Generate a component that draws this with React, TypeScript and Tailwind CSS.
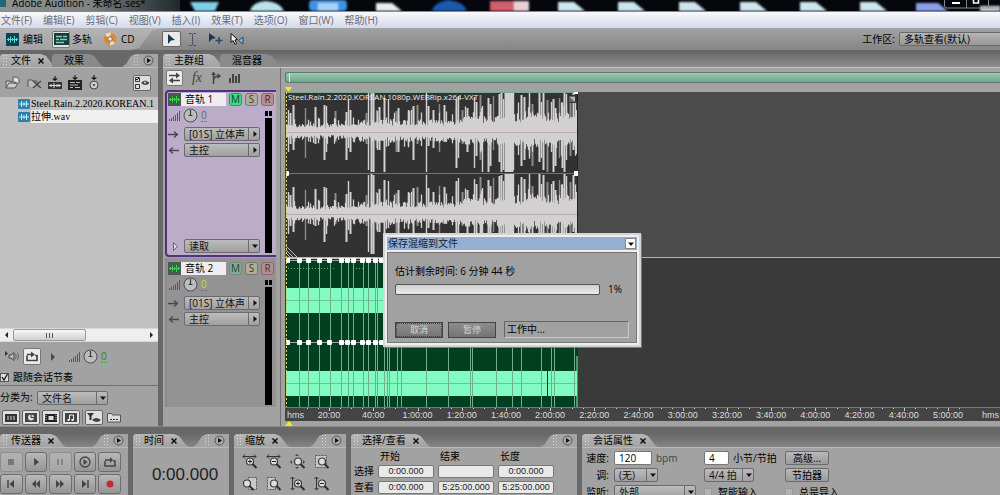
import React from "react";

const UI = "font-['Open_Sans','Noto_Sans_CJK_SC',sans-serif]";

/* ---------- small drawings ---------- */

type SvgProps = { w: number; h: number; children: React.ReactNode; cls?: string };
function Svg({ w, h, children, cls = "" }: SvgProps) {
  return (
    <svg width={w} height={h} viewBox={`0 0 ${w} ${h}`} fill="none" className={`shrink-0 ${cls}`} aria-hidden="true">
      {children}
    </svg>
  );
}

const Grip = () => (
  <Svg w={5} h={11}>
    {[1, 4, 7, 10].map((y) => (
      <g key={y} fill="#dcdcdc">
        <rect x="0" y={y - 1} width="1" height="1" />
        <rect x="3" y={y - 1} width="1" height="1" />
      </g>
    ))}
  </Svg>
);

const WaveIcon = ({ green = false }: { green?: boolean }) => (
  <Svg w={13} h={13}>
    <rect width="13" height="13" fill={green ? "#4a5a4d" : "#12405a"} />
    <path
      d="M1 6.5h11M2.5 5v3M4.5 3.5v6M6.5 5v3M8.5 3v7M10.5 5v3"
      stroke={green ? "#35d552" : "#5fd7c4"}
    />
  </Svg>
);

const FileWave = () => (
  <Svg w={12} h={10}>
    <rect width="12" height="10" rx="1" fill="#2e7fae" />
    <path d="M1 5h10M3.5 2v6M6 3v4M8.500 2v6" stroke="#c5f1f2" />
  </Svg>
);

const MultitrackIcon = () => (
  <Svg w={15} h={12}>
    <rect width="15" height="12" fill="#173a3d" />
    <path d="M2 3.500h6M9 3.500h4M2 6.500h3M6 6.500h7M2 9.500h8" stroke="#7fd0b4" strokeWidth="1.500" />
  </Svg>
);

const Disc = () => (
  <Svg w={14} h={14}>
    <circle cx="7" cy="7" r="6.500" fill="#d98b3e" />
    <path d="M7 7L2 3a6.500 6.500 0 0 1 6-2.400zM7 7l5 4a6.500 6.500 0 0 1-5 2.400z" fill="#f6d9b0" />
    <circle cx="7" cy="7" r="2.300" fill="#e9e9e9" stroke="#8b6239" />
  </Svg>
);

const Bars = () => (
  <Svg w={12} h={10}>
    <path d="M1.500 8v2M3.500 7v3M5.500 5.500V10M7.500 4v6M9.500 2v8M11.500 0v10" stroke="#5b5560" />
  </Svg>
);

const Knob = () => (
  <Svg w={15} h={15}>
    <circle cx="7.500" cy="7.500" r="6.500" fill="#bdbdbd" stroke="#4e4a52" />
    <path d="M7.500 2v6M5.500 7.500h4" stroke="#3a3a3a" strokeWidth="1.200" />
  </Svg>
);

const Arrow = ({ left = false }: { left?: boolean }) => (
  <Svg w={11} h={7}>
    <path
      d={left ? "M11 3.500H2M5 .5L1.500 3.500 5 6.500" : "M0 3.500h9M6 .5l3.500 3L6 6.500"}
      stroke="#4b4650"
      strokeWidth="1.300"
    />
  </Svg>
);

const LoopIcon = () => (
  <Svg w={14} h={12}>
    <path d="M2 4.500V9.500h10V4.500H10M2 3.500h5" stroke="#444" strokeWidth="1.700" />
    <path d="M6 .5L10 3.500 6 6.500z" fill="#444" />
  </Svg>
);

const Magnifier = ({ kind }: { kind: string }) => (
  <Svg w={16} h={16}>
    {(kind === "h+" || kind === "h-") && (
      <path d="M1 2.500h13M3 .5L1 2.500l2 2M12 .5l2 2-2 2" stroke="#333" />
    )}
    {(kind === "v+" || kind === "v-") && <path d="M2.500 1v13M.5 3l2-2 2 2M.5 12l2 2 2-2" stroke="#333" />}
    {kind === "all" && (
      <path d="M7 0l2 2H5zM0 8l2-2v4zM15 8l-2-2v4zM7 15l2-2H5z" fill="#444" />
    )}
    {["sel", "left", "right"].includes(kind) && (
      <rect
        x={kind === "left" ? 6.5 : 1.5}
        y="1.500"
        width={kind === "sel" ? 11 : 8}
        height="12"
        fill="#c8c8c8"
        stroke="#555"
        strokeDasharray="2 1"
      />
    )}
    <circle cx={kind === "left" ? 5 : 8} cy="7.500" r="3.500" fill="#dedede" stroke="#3b3b3b" strokeWidth="1.200" />
    <path d={kind === "left" ? "M7.500 10l4 4" : "M10.500 10l4 4"} stroke="#2d2d2d" strokeWidth="2" />
    {kind.endsWith("+") && <path d="M6 7.500h4M8 5.500v4" stroke="#222" />}
    {kind.endsWith("-") && <path d="M6 7.500h4" stroke="#222" />}
  </Svg>
);

const Tri = ({ down = false }: { down?: boolean }) => (
  <Svg w={6} h={6}>
    <path d={down ? "M0 1.500h6L3 5z" : "M1.500 0v6L5 3z"} fill="#111" />
  </Svg>
);

/* ---------- controls ---------- */

type DropProps = { label: string; value: string; down?: boolean; cls?: string };
function Drop({ label, value, down = false, cls = "" }: DropProps) {
  return (
    <span className={`grid h-[14px] shrink-0 items-center ${cls}`}>
      <select
        aria-label={label}
        className="col-start-1 row-start-1 h-full w-full appearance-none rounded-[2px] border border-[#6c6a6e] bg-linear-to-b from-[#bcbcbc] to-[#a0a0a0] pl-1 text-[10px] leading-[12px] text-[#111]"
      >
        <option>{value}</option>
      </select>
      <span className="pointer-events-none col-start-1 row-start-1 flex h-full w-3 items-center justify-center justify-self-end border-l border-[#6c6a6e]">
        <Tri down={down} />
      </span>
    </span>
  );
}

function Tab({ title, active = false, close = false }: { title: string; active?: boolean; close?: boolean }) {
  return (
    <button
      className={`flex h-[13px] items-center gap-[3px] whitespace-nowrap text-[10px] leading-[13px] text-black [clip-path:polygon(0_100%,0_2px,2px_0,calc(100%-15px)_0,calc(100%-10px)_2px,calc(100%-3px)_11px,100%_100%)] ${
        active ? "bg-linear-to-b from-[#b6b6b6] to-[#a2a2a2] pl-[3px]" : "-ml-1 bg-[#8a8a8a] pl-3"
      } ${close ? "pr-3" : "pr-5"}`}
    >
      {active && <Grip />}
      <span>{title}</span>
      {close && (
        <Svg w={6} h={6} cls="ml-1">
          <path d="M.5.5l5 5M5.500.5l-5 5" stroke="#111" strokeWidth="1.500" />
        </Svg>
      )}
    </button>
  );
}

const TabMenu = () => (
  <button
    aria-label="面板菜单"
    className="ml-auto flex h-[13px] items-center gap-1 bg-[#a4a4a4] pl-3 pr-1 [clip-path:polygon(0_100%,4px_10px,9px_2px,14px_0,100%_0,100%_100%)]"
  >
    <Grip />
    <Svg w={11} h={11}>
      <circle cx="5.500" cy="5.500" r="4.500" fill="#a9a9a9" stroke="#555" />
      <path d="M4 3v5l4-2.500z" fill="#111" />
    </Svg>
  </button>
);

function Panel({ title, cls, menu = true, children }: { title: string; cls: string; menu?: boolean; children: React.ReactNode }) {
  return (
    <section className={`flex min-w-0 flex-col ${cls}`}>
      <div className="flex bg-linear-to-b from-[#686868] to-[#858585]">
        <Tab title={title} active close />
        {menu && <TabMenu />}
      </div>
      <div className="flex-1 overflow-hidden border-t border-[#b8b8b8] bg-[#a2a2a2]">{children}</div>
    </section>
  );
}

/* ---------- track header ---------- */

type TrackProps = { name: string; selected?: boolean; cls: string };
function TrackHeader({ name, selected = false, cls }: TrackProps) {
  const chip = "h-[13px] w-[13px] rounded-[3px] border text-center text-[10px] leading-[11px]";
  return (
    <div className={`mr-1 flex flex-col pl-px pr-px ${cls}`}>
      <div className="flex items-center gap-[3px]">
        <div className="flex w-[58px]">
          <WaveIcon green />
          <input
            aria-label="音轨名称"
            defaultValue={name}
            className="h-[13px] min-w-0 flex-1 bg-[#efedf0] px-1 text-[10px] leading-[13px] text-black"
          />
        </div>
        <button className={`${chip} ${selected ? "border-[#2a9a58] bg-[#3edb81] text-[#0c4a26]" : "border-[#6d8c7b] bg-[#86ab96] text-[#1f4531]"}`}>M</button>
        <button className={`${chip} border-[#7a7768] bg-[#b1ad98] text-[#3e3b28]`}>S</button>
        <button className={`${chip} border-[#8a686b] bg-[#b48e93] text-[#532a2f]`}>R</button>
      </div>
      <div className="flex flex-1">
        <div className="flex flex-1 flex-col">
          <div className="mt-[2px] flex items-center gap-[3px]">
            <Bars />
            <Knob />
            <span className={`border-b border-dotted border-[#667] text-[10px] leading-[11px] ${selected ? "text-[#4a7058]" : "text-[#b8e61e]"}`}>0</span>
          </div>
          <div className="mt-1 flex items-center gap-[5px]">
            <Arrow />
            <Drop label="输入" value="[01S] 立体声" cls="w-[76px]" />
          </div>
          <div className="mt-[2px] flex items-center gap-[5px]">
            <Arrow left />
            <Drop label="输出" value="主控" cls="w-[76px]" />
          </div>
          {selected && (
            <div className="mb-[2px] mt-auto flex items-center gap-[5px]">
              <Svg w={11} h={9}>
                <path d="M5.500.5v8l4-4z" fill="#d9d3df" stroke="#6b6470" />
              </Svg>
              <Drop label="自动化" value="读取" down cls="w-[76px]" />
            </div>
          )}
        </div>
        <div className="mr-[3px] mt-[5px] flex w-[7px] flex-col gap-[2px]">
          <div className="flex justify-between">
            <span className="h-[5px] w-[3px] bg-black" />
            <span className="h-[5px] w-[3px] bg-black" />
          </div>
          <span className="mb-[2px] flex-1 bg-black" />
        </div>
      </div>
    </div>
  );
}

/* ---------- clips ---------- */

// [x, height above the axis, depth below it]
const PEAKS: number[][] = [
  [2, 22, 20], [4, 19, 12], [7, 27, 18], [19, 24, 26], [29, 25, 12], [38, 27, 28], [40, 26, 20], [49, 21, 10],
  [60, 20, 28], [62, 33, 16], [64, 22, 20], [80, 19, 12], [82, 39, 38], [85, 40, 40], [87, 39, 40], [90, 22, 16],
  [93, 25, 18], [98, 34, 40], [102, 33, 14], [110, 21, 20], [112, 24, 20], [122, 22, 14], [127, 26, 28],
  [131, 27, 12], [140, 39, 40], [142, 26, 14], [147, 22, 16], [153, 28, 20], [158, 27, 10], [170, 33, 36],
  [172, 36, 26], [176, 22, 12], [181, 24, 20], [188, 35, 36], [190, 30, 24], [194, 37, 28], [196, 26, 40],
  [202, 34, 40], [204, 28, 34], [207, 36, 18], [213, 38, 30], [215, 39, 40], [217, 33, 38], [219, 40, 40], [220, 40, 40],
  [221, 40, 40], [222, 40, 40], [223, 40, 40], [224, 40, 40], [225, 40, 40], [226, 40, 40], [227, 40, 38],
  [235, 37, 34], [238, 35, 28], [243, 40, 24], [246, 28, 34], [253, 40, 30], [255, 30, 26], [257, 39, 38],
  [261, 32, 40], [265, 30, 20], [267, 33, 40], [269, 24, 34], [273, 34, 26], [276, 26, 36], [278, 40, 40],
  [280, 38, 28], [284, 32, 24], [287, 39, 18], [290, 22, 22],
];

function laneHeights() {
  const out: { x: number; up: number; dn: number }[] = [];
  let s = 7;
  const rnd = () => {
    s = (s * 16807) % 2147483647;
    return s / 2147483647;
  };
  for (let x = 0; x < 291; x++) {
    const level = x < 70 ? 6 : x < 170 ? 9 : x < 228 ? 12 : 14;
    const spike = rnd() > 0.85 ? 1.8 : 1;
    out.push({ x, up: level * (0.7 + rnd() * 0.7) * spike, dn: level * (0.5 + rnd() * 0.6) * spike });
  }
  return out;
}
const LANE = laneHeights();

function Lane({ cy }: { cy: number }) {
  return (
    <g>
      {PEAKS.map(([x, up, dn], i) => (
        <path
          key={i}
          d={`M${x + 0.5} ${cy - up}V${cy + dn}`}
          stroke={i % 4 === 3 && (x < 219 || x > 227) ? "#8d8b8c" : "#d3d0d1"}
          strokeWidth={i % 3 ? 2 : 1.4}
        />
      ))}
      <path
        d={LANE.map(({ x, up, dn }) => `M${x + 0.5} ${cy - up}V${cy + dn}`).join("")}
        stroke="#d3d0d1"
        strokeWidth="1.300"
      />
      <path d={`M0 ${cy}.5H291`} stroke="#b9abac" />
    </g>
  );
}

function WaveClip() {
  return (
    <svg viewBox="0 0 292 165" width="292" height="165" fill="none" className="shrink-0" role="img" aria-label="音轨 1 波形">
      <rect width="292" height="165" fill="#333233" />
      <Lane cy={40} />
      <Lane cy={122} />
      <path d="M0 .5H292" stroke="#79a890" />
      <path d="M0 81.500H292" stroke="#62778a" strokeWidth="1.200" />
      <path d="M291.500 0V165" stroke="#222" />
      <g fill="#fff">
        <rect x="0" y="79" width="3" height="5" rx="1" />
        <rect x="288" y="79" width="5" height="5" />
        <rect x="288" y="0" width="4" height="2" />
      </g>
      <rect x="282.500" y="3.500" width="7" height="7" fill="#666" stroke="#333" />
      <path d="M284 5h5v5z" fill="#bbb" />
      <path d="M0 154l11 11M0 158l7 7M0 161l4 4" stroke="#bbb" />
      <path d="M.5 0V165" stroke="#d9d34a" strokeDasharray="2 2" />
    </svg>
  );
}

const CUTS = [13, 22, 33, 44, 55, 62, 67, 77, 82, 89, 91, 98, 101, 103, 111, 115, 140, 162, 184, 186, 210, 226, 235, 255, 265, 268, 288];
const HANDLES = [1, 13, 22, 33, 43, 55, 61, 67, 76, 82, 89, 95];

function GreenClip() {
  return (
    <svg viewBox="0 0 292 149" width="292" height="149" fill="none" className="shrink-0" role="img" aria-label="音轨 2 波形">
      <rect width="292" height="149" fill="#003f20" />
      <rect width="292" height="1" fill="#c9c9c9" />
      <path d="M0 30H291V55H0zM0 113H291V138H0z" fill="#82fbc0" />
      <path d="M0 42.500H291M0 125.500H291" stroke="#62c896" />
      <path d="M2 10.500h48M70 10.500h8" stroke="#6aa487" strokeDasharray="1 2" />
      {CUTS.map((x) => (
        <path key={x} d={`M${x}.5 1V149`} stroke="#6fae8e" />
      ))}
      <path d="M261.500 85V146" stroke="#063d22" />
      <path d="M291 98V149" stroke="#82fbc0" />
      <path d="M0 2.500H97M0 84.500H97" stroke="#9aa79f" />
      {HANDLES.map((x) => (
        <g key={x} fill="#fff">
          <rect x={x - 2} y="0" width="5" height="5" rx="1" />
          <rect x={x - 2} y="82" width="5" height="5" rx="1" />
        </g>
      ))}
      <path d="M.5 0V149" stroke="#d9d34a" strokeDasharray="2 2" />
    </svg>
  );
}

const TIMES = ["20:00", "40:00", "1:00:00", "1:20:00", "1:40:00", "2:00:00", "2:20:00", "2:40:00", "3:00:00", "3:20:00", "3:40:00", "4:00:00", "4:20:00", "4:40:00", "5:00:00"];

function Ruler() {
  return (
    <div className="flex h-[14px] border-t border-[#777] bg-[#444] text-[9px] leading-[10px] text-[#dedede] font-['Liberation_Sans',sans-serif]">
      <span className="w-[22px] pl-[2px] pt-[2px]">hms</span>
      {TIMES.map((t) => (
        <div key={t} className="flex min-w-0 flex-1 flex-col items-center">
          <div className="flex h-[2px] w-full">
            <span className="h-px w-1/4 border-l border-[#ccc]" />
            <span className="h-px w-1/4 border-l border-[#ccc]" />
            <span className="h-[3px] w-1/4 border-l border-[#ccc]" />
            <span className="h-px w-1/4 border-l border-[#ccc]" />
          </div>
          <span>{t}</span>
        </div>
      ))}
      <span className="w-[30px] whitespace-nowrap pr-px pt-[2px] text-right">hms</span>
    </div>
  );
}

/* ---------- page sections ---------- */

function TitleBar() {
  return (
    <header className="flex h-[11px] items-end overflow-hidden bg-[#05070c]">
      <div className="flex h-full w-[180px] items-start bg-linear-to-r from-[#8e9494] via-[#7d8384] to-[#20282c]">
        <Svg w={7} h={8}>
          <rect width="6" height="7" fill="#1f6a78" />
        </Svg>
        <h1 className="-mt-1 ml-[5px] whitespace-nowrap text-[10px] leading-[14px] text-black">
          Adobe Audition - 未命名.ses*
        </h1>
      </div>
      <svg viewBox="180 0 820 11" preserveAspectRatio="none" className="h-full min-w-0 flex-1" aria-hidden="true">
        <defs>
          <filter id="soft" x="-20%" y="-20%" width="140%" height="140%">
            <feGaussianBlur stdDeviation="1.200" />
          </filter>
        </defs>
        <g filter="url(#soft)">
          <path d="M190 2h29l-4 9h-20z" fill="#7fd0e6" />
          <path d="M250 11q2-9 16-10 14 1 18 10z" fill="#b9e2ec" />
          <rect x="309" y="0" width="38" height="11" rx="4" fill="#3f93e4" />
          <path d="M318 3h20v8h-20z" fill="#a4d3f7" />
          <path d="M376 3h16l10 8h-26z" fill="#e8eef0" />
          <path d="M432 11q2-9 17-11 15 2 18 11z" fill="#1c58b0" />
          <rect x="490" y="1" width="24" height="10" fill="#cf5f6e" />
          <rect x="514" y="1" width="15" height="10" fill="#ead0d6" />
          {[558, 618, 679, 740, 800, 860].map((x) => (
            <path key={x} d={`M${x} 2h16l11 9H${x}z`} fill="#cde6ee" />
          ))}
          <path d="M916 3h22l10 8h-32z" fill="#8ba0ea" />
          <path d="M980 6h20v5h-20z" fill="#cfd8e0" />
        </g>
        <path d="M944.500 0v6q0 2 3 2H1000M966.500 0v8M988.500 0v8" stroke="#888" fill="none" />
        <rect x="952" y="2" width="8" height="2" fill="#fff" />
        <path d="M973.500-2v5h5v-5" stroke="#fff" strokeWidth="1.500" fill="none" />
      </svg>
    </header>
  );
}

const MENUS = ["文件(F)", "编辑(E)", "剪辑(C)", "视图(V)", "插入(I)", "效果(T)", "选项(O)", "窗口(W)", "帮助(H)"];

function ToolBar() {
  return (
    <div className="flex h-[22px] items-stretch bg-linear-to-b from-[#a3a3a3] to-[#858585] text-[10px] text-black">
      <div className="flex w-[162px] items-center bg-linear-to-b from-[#b4b4b4] to-[#a2a2a2] pl-[6px] [clip-path:polygon(0_0,100%_0,94%_10%,86%_90%,80%_100%,0_100%)]">
        <button className="flex items-center gap-1"><WaveIcon />编辑</button>
        <button className="ml-[9px] flex items-center gap-[2px]">
          <span className="flex h-[17px] w-[18px] items-center justify-center rounded-[2px] border border-[#777] bg-[#e2e2e2]"><MultitrackIcon /></span>
          多轨
        </button>
        <button className="ml-[11px] flex items-center gap-1"><Disc />CD</button>
      </div>
      <div className="flex items-center gap-[7px]">
        <button aria-label="混合工具" className="flex h-4 w-[19px] items-center justify-center rounded-[2px] border border-[#666] bg-[#e9e9e9]">
          <Svg w={9} h={11}><path d="M1 0v10l3-3.500L8 6z" fill="#17384f" /></Svg>
        </button>
        <button aria-label="时间选择">
          <Svg w={9} h={13}><path d="M1 .5h2.500l1 1 1-1H8M1 12.500h2.500l1-1 1 1H8M4.500 1v11" stroke="#4c5063" /></Svg>
        </button>
        <button aria-label="移动复制" className="ml-1">
          <Svg w={15} h={12}><path d="M1 0v9l3-3 4-1z" fill="#17384f" /><path d="M11 4v7M7.500 7.500h7" stroke="#27496a" strokeWidth="1.500" /></Svg>
        </button>
        <button aria-label="擦洗">
          <Svg w={15} h={13}><path d="M1 .5v9l2-2 2 4 1.500-1L5 7l2.500-.5z" fill="#eee" stroke="#111" /><path d="M13 4v7L8.500 7.500z" fill="#8fb6ce" stroke="#27496a" /></Svg>
        </button>
      </div>
      <label className="ml-auto flex items-center gap-1 overflow-hidden">
        工作区:
        <span className="w-[101px]">
          <select className="h-[14px] w-[130px] appearance-none rounded-[2px] border border-[#6a6a6a] bg-linear-to-b from-[#b5b5b5] to-[#989898] pl-1 text-[10px] leading-[12px]">
            <option>多轨查看(默认)</option>
          </select>
        </span>
      </label>
    </div>
  );
}

function FilesPanel() {
  const small = "flex h-[15px] w-[18px] items-center justify-center rounded-[2px] border border-[#666] bg-[#e0e0e0]";
  return (
    <section className="flex w-[158px] shrink-0 flex-col">
      <div className="flex items-end pt-1">
        <Tab title="文件" active close />
        <Tab title="效果" />
        <TabMenu />
      </div>
      <div className="flex flex-1 flex-col border-t border-[#bbb] bg-[#a2a2a2]">
        <div className="flex h-[29px] shrink-0 items-center gap-[6px] pl-[5px] pr-[7px]">
          <button aria-label="打开文件">
            <Svg w={16} h={14}><path d="M1 12V5h4l1 1h4v2M1 12l3-5h9l-3 5z" fill="#ccc" stroke="#555" /><path d="M8 5V1h4l2 2v4" fill="#ddd" stroke="#555" /></Svg>
          </button>
          <button aria-label="关闭文件">
            <Svg w={15} h={12}><path d="M1 10V3h4l1 1h4v5" stroke="#555" fill="#bbb" /><path d="M6 4l8 7M14 4l-8 7" stroke="#444" strokeWidth="1.300" /></Svg>
          </button>
          <button aria-label="插入到多轨">
            <Svg w={14} h={14}><path d="M4 2.500h6L7 5zM6.500 0h1v3h-1z" fill="#111" /><rect y="6" width="14" height="7" fill="#333" /><path d="M1 9.500h12M3 8v3M6 7v5M9 8v3M11 8v3" stroke="#ddd" /></Svg>
          </button>
          <button aria-label="插入到会话">
            <Svg w={14} h={15}><path d="M4 2.500h6L7 5zM6.500 0h1v3h-1z" fill="#111" /><rect y="5" width="14" height="10" fill="#222" /><path d="M2 7.500h5M8 7.500h4M2 10h8M2 12.500h3M7 12.500h5" stroke="#bbb" /></Svg>
          </button>
          <button aria-label="插入到 CD">
            <Svg w={13} h={15}><path d="M3 2.500h6L6 5zM5.500 0h1v3h-1z" fill="#111" /><circle cx="6" cy="10" r="4" fill="#ccc" stroke="#444" /><circle cx="6" cy="10" r="1" fill="#333" /></Svg>
          </button>
          <button aria-label="显示选项" className="ml-auto flex h-4 w-[18px] items-center justify-center rounded-[2px] border border-[#666] bg-[#dedede]">
            <Svg w={15} h={12}><path d="M.5.5h4v4h-4zM.5 7.500h4v4h-4z" stroke="#333" /><path d="M1 2l1 1 2-2" stroke="#111" /><path d="M6 6q4-5 8.500 0-4 4-8.500 0z" fill="#444" /><circle cx="10" cy="5.500" r="1" fill="#ddd" /></Svg>
          </button>
        </div>
        <ul className="min-h-0 flex-1 bg-[#c1c1c1] text-[10px] leading-[13px] text-black font-['Liberation_Serif','Noto_Sans_CJK_SC',serif]">
          <li className="flex items-center gap-[1px] overflow-hidden whitespace-nowrap pl-[18px]"><FileWave />Steel.Rain.2.2020.KOREAN.1</li>
          <li className="flex items-center gap-[1px] pl-[18px]"><FileWave /><span className="flex-1 bg-[#f0f0f0]">拉伸.wav</span></li>
        </ul>
        <div className="flex h-[14px] shrink-0 items-center border-y border-[#d8d8d8] bg-[#eee] pl-1 pr-1">
          <Svg w={5} h={6}><path d="M4 0v6L1 3z" fill="#222" /></Svg>
          <span className="ml-1 flex h-[12px] w-[73px] items-center justify-center rounded-[2px] border border-[#999] bg-linear-to-b from-[#f8f8f8] to-[#cfcfd2]">
            <Svg w={7} h={5}><path d="M.5 0v5M3.500 0v5M6.500 0v5" stroke="#555" /></Svg>
          </span>
          <Svg w={5} h={6} cls="ml-auto"><path d="M1 0v6l3-3z" fill="#222" /></Svg>
        </div>
        <div className="flex h-[27px] shrink-0 items-center pl-1 pt-[2px]">
          <button aria-label="播放"><Svg w={15} h={11}><path d="M1 0v5l3-2.500z" fill="#333" /><path d="M5 4h2l3-2.500v8L7 7H5z" stroke="#444" fill="#bbb" /><path d="M11.500 3q1.500 2.500 0 5M13.500 2q2 3.500 0 7" stroke="#666" /></Svg></button>
          <button aria-label="循环播放" className="ml-1 flex h-[17px] w-[18px] items-center justify-center rounded-[2px] border border-[#777] bg-[#ececec]"><LoopIcon /></button>
          <Svg w={6} h={8} cls="ml-[9px]"><path d="M1 0v8l4-4z" fill="#4a4a4a" /></Svg>
          <span className="ml-[12px] flex items-center gap-[3px]"><Bars /><Knob /><span className="border-b border-dotted border-[#3a3] text-[10px] leading-[11px] text-[#238a23]">0</span></span>
        </div>
        <label className="flex h-[16px] shrink-0 items-center gap-1 text-[10px] leading-[14px]">
          <input type="checkbox" defaultChecked className="peer sr-only" />
          <Svg w={9} h={9}><rect x=".5" y=".5" width="8" height="8" fill="#dedede" stroke="#555" /><path d="M2 4l2 3 3.500-6" stroke="#111" strokeWidth="1.300" /></Svg>
          跟随会话节奏
        </label>
        <div className="flex h-[22px] shrink-0 items-center gap-1 border-t border-[#6f6f6f] pt-[2px] text-[10px]">
          <span className="w-[33px] whitespace-nowrap">分类为:</span>
          <Drop label="分类为" value="文件名" down cls="w-[71px]" />
        </div>
        <div className="flex h-[19px] shrink-0 items-center gap-[2px] pl-[2px] pt-[2px]">
          <button aria-label="音频文件" className={small}><Svg w={12} h={8}><rect width="12" height="8" fill="#333" /><path d="M3 2v4M6 2v4M9 2v4" stroke="#ddd" /></Svg></button>
          <button aria-label="循环文件" className={small}><Svg w={12} h={9}><rect width="12" height="9" fill="#444" /><circle cx="6" cy="4.500" r="3" fill="#ddd" /><path d="M6 1v3.500h3" stroke="#333" /></Svg></button>
          <button aria-label="视频文件" className={small}><Svg w={12} h={8}><rect width="12" height="8" fill="#222" /><rect x="3.500" y="2" width="5" height="4" fill="#ddd" /><path d="M1 1v6M11 1v6" stroke="#ccc" strokeDasharray="1 1" /></Svg></button>
          <button aria-label="MIDI 文件" className={small}><Svg w={12} h={9}><rect width="12" height="9" fill="#444" /><path d="M4.500 7V2h4v5" stroke="#eee" /><path d="M2.500 6h2v2h-2zM6.500 6h2v2h-2z" fill="#eee" /></Svg></button>
          <span className="h-[15px] w-px bg-[#777]" />
          <button aria-label="筛选" className={small}><Svg w={14} h={10}><path d="M0 0h7L4.500 3v4h-2V3z" fill="#333" /><path d="M5 7q4-4 9 0-4 4-9 0z" fill="#444" /></Svg></button>
          <button aria-label="完整路径" className="ml-[2px]"><Svg w={14} h={11}><path d="M.5 10V1.500h4l1 1.500h8V10z" fill="#ddd" stroke="#555" /><path d="M3 7.500h2M6 7.500h2M9 7.500h2" stroke="#333" /></Svg></button>
        </div>
      </div>
    </section>
  );
}

function MainGroup() {
  return (
    <section className="flex min-w-0 flex-1 flex-col">
      <div className="flex items-end bg-linear-to-b from-[#636363] to-[#8e8e8e] pt-1">
        <Tab title="主群组" active />
        <Tab title="混音器" />
      </div>
      <div className="flex min-h-0 flex-1 border-t border-[#c6c6c6] bg-[#a2a2a2]">
        <div className="flex w-[118px] shrink-0 flex-col border-r border-[#707070] pl-[2px]">
          <div className="mb-[2px] flex h-5 shrink-0 items-center gap-[8px] pl-px">
            <button aria-label="输入输出" className="flex h-4 w-[17px] items-center justify-center rounded-[2px] border border-[#777] bg-[#ececec]">
              <Svg w={13} h={12}><path d="M1 3.500h8M12 8.500H4" stroke="#444" strokeWidth="1.700" /><path d="M8 .5l4 3-4 3zM5 5.500l-4 3 4 3z" fill="#444" /></Svg>
            </button>
            <button className="w-3 text-[14px] italic leading-[14px] text-[#444] font-['Liberation_Serif',serif]">fx</button>
            <button aria-label="发送"><Svg w={10} h={12}><path d="M2.500 12V0M2.500 8.500Q3 4 8 4" stroke="#444" strokeWidth="1.500" /><path d="M6.500 1l3.500 3-3.500 3zM0 3l2.500-3L5 3z" fill="#444" /></Svg></button>
            <button aria-label="均衡"><Svg w={11} h={10}><path d="M1 5v5M4 1v9M7 3v7M10 1v9" stroke="#444" strokeWidth="2" /></Svg></button>
          </div>
          <TrackHeader name="音轨 1" selected cls="h-[167px] shrink-0 rounded-l-[4px] border-2 border-r-0 border-[#54307e] bg-[#bbadca] pt-px" />
          <TrackHeader name="音轨 2" cls="mt-px h-[149px] shrink-0 border-l-2 border-[#8a8a8a] bg-[#939393] pt-1" />
        </div>
        <div className="flex min-w-0 flex-1 flex-col pl-1">
          <div className="mt-1 h-[11px] shrink-0 rounded-l-[3px] border border-r-0 border-[#5d7a6c] bg-linear-to-b from-[#9cc9b5] to-[#6fa68c] pl-[3px]">
            <span className="block h-full w-px bg-[#d9efe4]" />
          </div>
          <div className="flex h-[9px] shrink-0 items-end">
            <Svg w={7} h={5}><path d="M0 0h7L3.500 5z" fill="#f4ec1a" /></Svg>
          </div>
          <div className="grid shrink-0 bg-[#4b4b4b] pl-px">
            <div className="col-start-1 row-start-1"><WaveClip /></div>
            <span className="col-start-1 row-start-1 self-start pl-[2px] text-[8px] leading-[10px] text-[#eee]">
              Steel.Rain.2.2020.KOREAN.1080p.WEBRip.x264-VXT
            </span>
          </div>
          <div className="shrink-0 border-t border-[#b5b5b5] bg-[#3a3a3a] pl-px"><GreenClip /></div>
          <Ruler />
          <div className="flex shrink-0 items-start">
            <Svg w={8} h={5}><path d="M0 5h8L4 0z" fill="#f4ec1a" /></Svg>
          </div>
        </div>
      </div>
    </section>
  );
}

const TRANSPORT: { name: string; art: React.ReactNode; dim?: boolean }[] = [
  { name: "停止", dim: true, art: <rect x="4" y="3" width="6" height="6" fill="#777" /> },
  { name: "播放", art: <path d="M5 2v8l5-4z" fill="#444" /> },
  { name: "暂停", dim: true, art: <path d="M5 3v6M9 3v6" stroke="#777" strokeWidth="1.500" /> },
  { name: "播放到结尾", art: <><circle cx="7" cy="6" r="5" stroke="#444" strokeWidth="1.300" /><path d="M5.500 3v6L9.500 6z" fill="#444" /></> },
  { name: "循环", art: <><path d="M2 5v5h10V5h-2M2 4h5" stroke="#444" strokeWidth="1.500" /><path d="M7 1l3 3-3 3z" fill="#444" /></> },
  { name: "到开头", art: <><path d="M4 2v8" stroke="#444" strokeWidth="1.500" /><path d="M10 2v8L5.500 6z" fill="#444" /></> },
  { name: "倒放", art: <path d="M7 2v8L3 6zM11 2v8L7 6z" fill="#444" /> },
  { name: "快进", art: <path d="M3 2v8l4-4zM7 2v8l4-4z" fill="#444" /> },
  { name: "到结尾", art: <><path d="M10 2v8" stroke="#444" strokeWidth="1.500" /><path d="M4 2v8l4.500-4z" fill="#444" /></> },
  { name: "录音", art: <circle cx="7" cy="6" r="3.500" fill="#c62a31" /> },
];

function BottomRow() {
  const cell = "h-[13px] w-full min-w-0 rounded-[2px] border border-[#777] bg-[#e9e9e9] text-center text-[9px] leading-[12px] text-[#222] font-['Liberation_Sans',sans-serif]";
  const btn = "h-[14px] w-[44px] rounded-[2px] border border-[#6c6c6c] bg-linear-to-b from-[#b9b9b9] to-[#9b9b9b] text-[10px] leading-[12px]";
  return (
    <footer className="flex h-[69px] shrink-0 gap-[5px] border-t border-[#8a8a8a] bg-[#686868] pt-[7px] text-[10px] text-black">
      <Panel title="传送器" cls="w-[128px]">
        <div className="grid w-[121px] grid-cols-5 gap-[2px] pt-1">
          {TRANSPORT.map((t) => (
            <button
              key={t.name}
              aria-label={t.name}
              className={`flex h-5 items-center justify-center rounded-[3px] border bg-linear-to-b ${
                t.dim ? "border-[#8c8c8c] from-[#b2b2b2] to-[#a6a6a6]" : "border-[#6d6d6d] from-[#b8b8b8] to-[#959595]"
              }`}
            >
              <Svg w={14} h={12}>{t.art}</Svg>
            </button>
          ))}
        </div>
      </Panel>
      <Panel title="时间" cls="w-[96px]">
        <p className="pl-2 pt-[17px] text-center text-[17px] leading-[20px] text-[#222] font-['Liberation_Sans',sans-serif]">0:00.000</p>
      </Panel>
      <Panel title="缩放" cls="w-[112px]">
        <div className="grid w-24 grid-cols-4 justify-items-end gap-y-[6px] pt-[6px]">
          {["h+", "h-", "all", "sel", "left", "right", "v+", "v-"].map((k) => (
            <button key={k} aria-label={`缩放 ${k}`}><Magnifier kind={k} /></button>
          ))}
        </div>
      </Panel>
      <Panel title="选择/查看" cls="w-[226px]">
        <table className="ml-[3px] w-[202px] table-fixed border-collapse leading-[12px]">
          <colgroup><col className="w-[22px]" /><col /><col /><col /></colgroup>
          <thead>
            <tr className="h-[15px]">
              <td />
              {["开始", "结束", "长度"].map((h) => (
                <th key={h} className="px-1 py-0 text-left font-normal">{h}</th>
              ))}
            </tr>
          </thead>
          <tbody>
            {[["选择", "0:00.000", "", "0:00.000"], ["查看", "0:00.000", "5:25:00.000", "5:25:00.000"]].map(([h, ...v]) => (
              <tr key={h} className="h-4">
                <th className="whitespace-nowrap p-0 text-left font-normal">{h}</th>
                {v.map((x, i) => (
                  <td key={i} className="px-[2px] py-0"><input aria-label={`${h} ${i + 1}`} defaultValue={x} className={`${cell} block`} /></td>
                ))}
              </tr>
            ))}
          </tbody>
        </table>
      </Panel>
      <Panel title="会话属性" cls="flex-1" menu={false}>
        <div className="grid grid-cols-[27px_85px_76px_1fr] items-center gap-x-[5px] gap-y-[3px] whitespace-nowrap pt-[3px] leading-[14px]">
          <label htmlFor="tempo" className="text-right">速度:</label>
          <span className="flex items-center gap-1">
            <input id="tempo" defaultValue="120" className="h-[14px] w-[38px] rounded-[2px] border border-[#777] bg-white pl-1 text-[10px]" />
            <span className="text-[#444]">bpm</span>
          </span>
          <label className="flex items-center gap-1">
            <input defaultValue="4" className="h-[14px] w-[25px] rounded-[2px] border border-[#777] bg-white pl-1 text-[10px]" />
            小节/节拍
          </label>
          <button className={btn}>高级...</button>
          <span className="text-right">调:</span>
          <Drop label="调" value="(无)" down cls="w-[44px]" />
          <Drop label="拍号" value="4/4 拍" down cls="w-[50px]" />
          <button className={btn}>节拍器</button>
          <span className="text-right">监听:</span>
          <Drop label="监听" value="外部" down cls="w-[82px]" />
          <label className="flex items-center gap-[6px]">
            <input type="checkbox" className="h-2 w-2 appearance-none border border-[#999] bg-[#b2b2b2]" />智能输入
          </label>
          <label className="flex items-center gap-[6px]">
            <input type="checkbox" className="h-2 w-2 appearance-none border border-[#999] bg-[#b2b2b2]" />总是导入
          </label>
        </div>
      </Panel>
    </footer>
  );
}

function SaveDialog() {
  const b = "h-4 w-12 border border-[#444] bg-linear-to-b from-[#8d8d8d] to-[#757575] text-[9px] leading-[13px] text-[#d4d4d4]";
  return (
    <div role="dialog" aria-label="保存混缩到文件" className="absolute left-[383px] top-[233px] w-[258px] border-2 border-[#d5d5d5] bg-[#eeeeee] p-[2px] text-[10px] text-black shadow-[1px_1px_0_#777]">
      <div className="flex h-[13px] items-center justify-between bg-[#93b0d0] pl-px pr-px text-[#14233c]">
        <span className="leading-[13px]">保存混缩到文件</span>
        <button aria-label="菜单" className="flex h-[11px] w-[11px] items-center justify-center border border-[#888] bg-white"><Tri down /></button>
      </div>
      <div className="mt-[2px] border border-[#777] bg-[#a1a1a1] px-[7px] pb-1 pt-[11px]">
        <p className="leading-[14px]">估计剩余时间: 6 分钟 44 秒</p>
        <div className="mt-[4px] flex items-center">
          <div role="progressbar" aria-valuenow={1} className="h-[11px] w-[205px] rounded-[2px] border border-[#555] bg-linear-to-b from-[#cfcfcf] to-[#ececec]" />
          <span className="ml-[8px] leading-[14px]">1%</span>
        </div>
        <div className="mt-[25px] flex items-center gap-[5px]">
          <button className={`${b} outline-1 -outline-offset-2 outline-dotted outline-[#444]`}>取消</button>
          <button className={b}>暂停</button>
          <output className="ml-[3px] h-[17px] flex-1 border border-b-[#ccc] border-l-[#666] border-r-[#ccc] border-t-[#666] pl-[2px] leading-[15px]">工作中...</output>
        </div>
      </div>
    </div>
  );
}

export default function App() {
  return (
    <div className={`relative flex h-screen flex-col overflow-hidden bg-[#686868] ${UI}`}>
      <TitleBar />
      <nav className="flex h-[17px] shrink-0 items-center gap-[11px] border-t border-[#888] bg-linear-to-b from-[#f8f9fc] to-[#d3daea] pl-px text-[10px] leading-[14px] text-[#6a6a72]">
        {MENUS.map((m) => (
          <a key={m} href="#menu">{m}</a>
        ))}
      </nav>
      <ToolBar />
      <div className="flex min-h-0 flex-1 gap-[5px]">
        <FilesPanel />
        <MainGroup />
      </div>
      <BottomRow />
      <SaveDialog />
    </div>
  );
}
